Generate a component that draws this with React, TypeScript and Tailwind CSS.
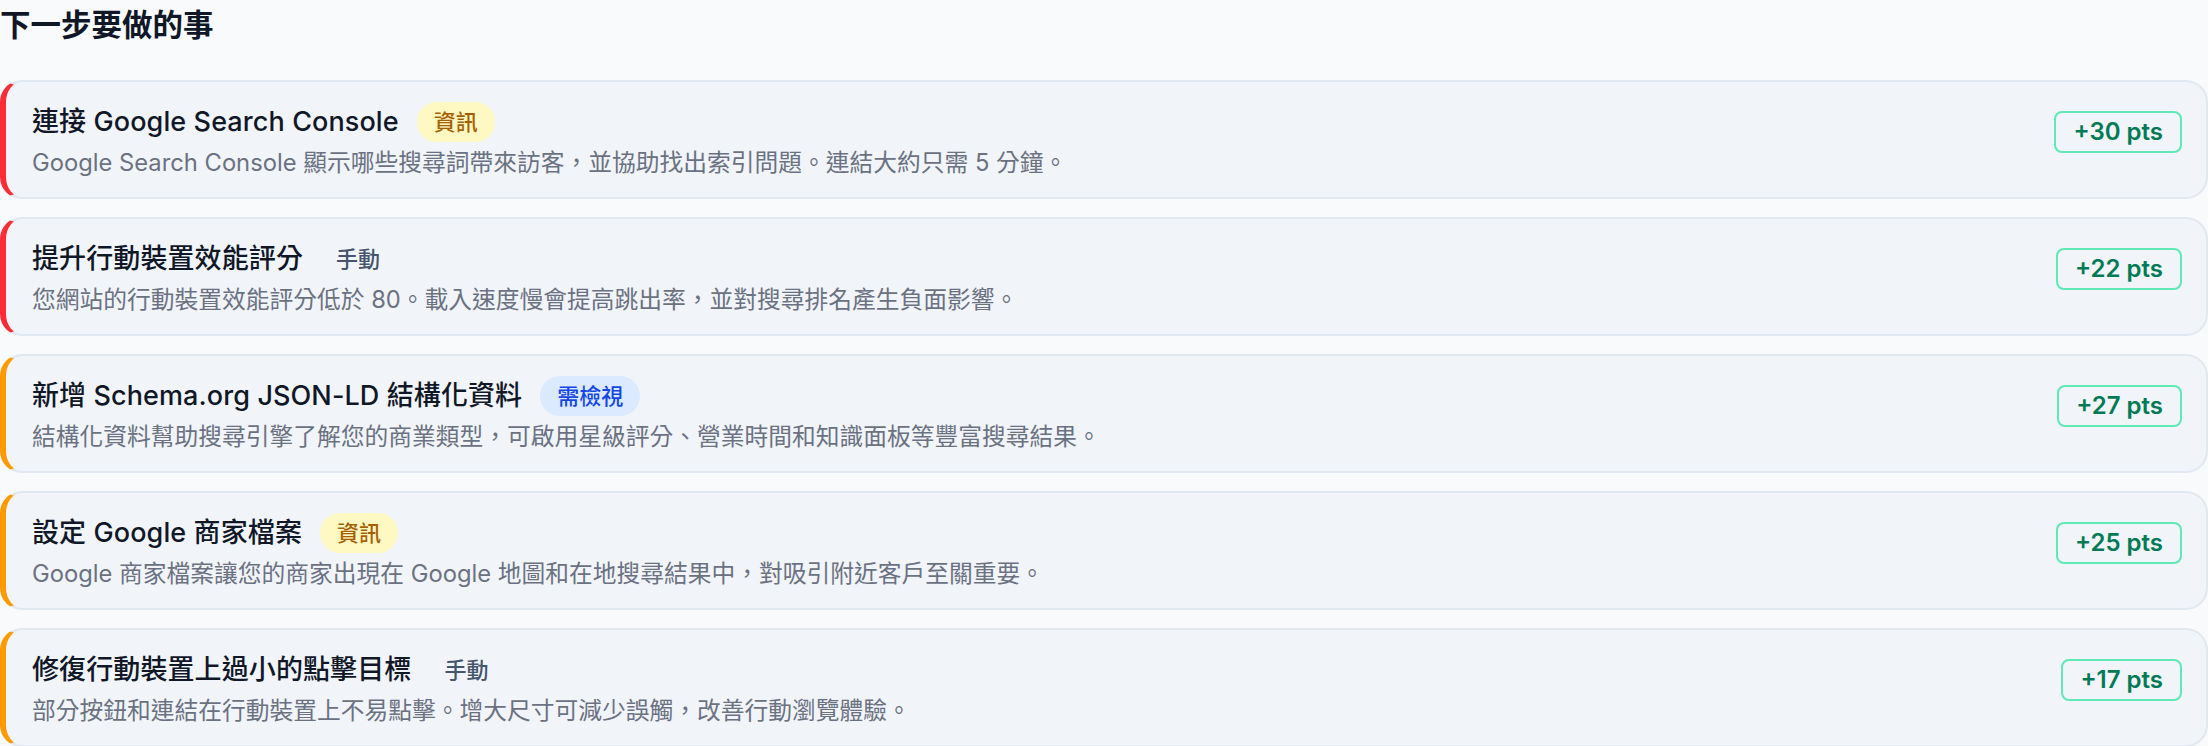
import React from 'react';

type Tag = 'info' | 'manual' | 'review';

interface Task {
  id: number;
  title: string;
  description: string;
  tag: Tag;
  points: number;
  priority: 'high' | 'medium';
}

const tasks: Task[] = [
  {
    id: 1,
    title: '連接 Google Search Console',
    description: 'Google Search Console 顯示哪些搜尋詞帶來訪客，並協助找出索引問題。連結大約只需 5 分鐘。',
    tag: 'info',
    points: 30,
    priority: 'high',
  },
  {
    id: 2,
    title: '提升行動裝置效能評分',
    description: '您網站的行動裝置效能評分低於 80。載入速度慢會提高跳出率，並對搜尋排名產生負面影響。',
    tag: 'manual',
    points: 22,
    priority: 'high',
  },
  {
    id: 3,
    title: '新增 Schema.org JSON-LD 結構化資料',
    description: '結構化資料幫助搜尋引擎了解您的商業類型，可啟用星級評分、營業時間和知識面板等豐富搜尋結果。',
    tag: 'review',
    points: 27,
    priority: 'medium',
  },
  {
    id: 4,
    title: '設定 Google 商家檔案',
    description: 'Google 商家檔案讓您的商家出現在 Google 地圖和在地搜尋結果中，對吸引附近客戶至關重要。',
    tag: 'info',
    points: 25,
    priority: 'medium',
  },
  {
    id: 5,
    title: '修復行動裝置上過小的點擊目標',
    description: '部分按鈕和連結在行動裝置上不易點擊。增大尺寸可減少誤觸，改善行動瀏覽體驗。',
    tag: 'manual',
    points: 17,
    priority: 'medium',
  },
];

// Etiqueta junto al título de cada tarea
const TagPill: React.FC<{ tag: Tag }> = ({ tag }) => {
  if (tag === 'info') {
    return (
      <span className="ml-[18px] h-[40px] px-[17px] rounded-full bg-yellow-100 text-yellow-700 text-[22px] font-medium leading-[40px]">
        資訊
      </span>
    );
  }
  if (tag === 'review') {
    return (
      <span className="ml-[18px] h-[40px] px-[17px] rounded-full bg-blue-100 text-blue-700 text-[22px] font-medium leading-[40px]">
        需檢視
      </span>
    );
  }
  return (
    <span className="ml-[16px] h-[40px] px-[17px] rounded-full text-slate-600 text-[22px] font-medium leading-[40px]">
      手動
    </span>
  );
};

const TaskCard: React.FC<{ task: Task }> = ({ task }) => {
  const borderColor = task.priority === 'high' ? 'border-l-red-500' : 'border-l-amber-500';

  return (
    <div
      className={`w-full flex items-start justify-between bg-[#f1f4f9] border-2 border-slate-200 border-l-[6px] ${borderColor} rounded-[22px] pl-[26px] pr-[24px] pt-[20px] pb-[17px]`}
    >
      <div className="flex flex-col">
        <div className="flex items-center h-[40px]">
          <h3 className="text-[27px] tracking-[0.1px] font-medium text-gray-900 leading-[40px]">{task.title}</h3>
          <TagPill tag={task.tag} />
        </div>
        <p className="mt-[4px] text-[23.75px] text-gray-500 leading-[34px]">{task.description}</p>
      </div>
      <span className="mt-[9px] shrink-0 h-[42px] px-[17px] rounded-[8px] border-2 border-emerald-300 text-emerald-700 text-[24px] font-semibold leading-[38px]">
        +{task.points} pts
      </span>
    </div>
  );
};

export default function App() {
  return (
    <div
      className="min-h-screen w-full bg-slate-50"
      style={{ fontFamily: 'Inter, "Noto Sans CJK TC", "Noto Sans", sans-serif' }}
    >
      <h2 className="pt-[6px] text-[30.5px] font-semibold text-gray-900 leading-[38px]">下一步要做的事</h2>
      <div className="mt-[36px] flex flex-col gap-[18px]">
        {tasks.map((task) => (
          <TaskCard key={task.id} task={task} />
        ))}
      </div>
    </div>
  );
}
